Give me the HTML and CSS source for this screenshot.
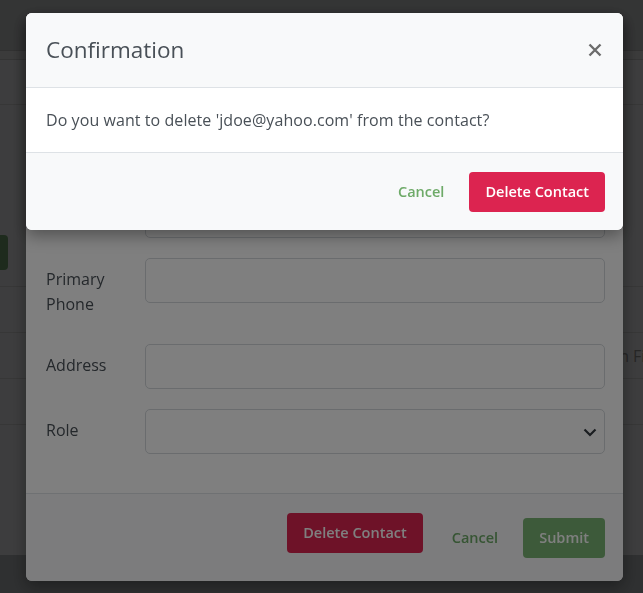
FILE: index.html
```html
<!DOCTYPE html>
<html lang="en">
<head>
<meta charset="utf-8">
<title>Contacts</title>
<link rel="stylesheet" href="styles.css">
</head>
<body>
<div class="page">
  <header class="topbar"></header>
  <div class="subbar"></div>
  <div class="titlebar"></div>
  <div class="toolbar"><span class="add-btn"></span></div>
  <div class="table">
    <div class="trow"></div>
    <div class="trow"><span></span><span class="cell-name">Jordan Finley</span></div>
    <div class="trow"></div>
    <div class="trow filler"></div>
  </div>
</div>

<div class="backdrop backdrop-form">
  <div class="modal form-modal">
    <div class="modal-header">
      <h5 class="modal-title">Edit Contact</h5>
    </div>
    <div class="modal-body form-body">
      <div class="form-row tall"><label class="form-label">Display Name</label><div class="control"></div></div>
      <div class="form-row"><label class="form-label">Email</label><div class="control"></div></div>
      <div class="form-row tall"><label class="form-label">Primary Phone</label><div class="control"></div></div>
      <div class="form-row"><label class="form-label">Address</label><div class="control"></div></div>
      <div class="form-row"><label class="form-label">Role</label>
        <div class="control select">
          <svg class="chevron" width="14" height="9" viewBox="0 0 14 9"><path d="M1.5 1.5 L7 7 L12.5 1.5" fill="none" stroke="#343a40" stroke-width="2.2"/></svg>
        </div>
      </div>
    </div>
    <div class="modal-footer form-footer">
      <button class="btn btn-danger btn-raised">Delete Contact</button>
      <button class="btn btn-link">Cancel</button>
      <button class="btn btn-success">Submit</button>
    </div>
  </div>
</div>

<div class="backdrop backdrop-confirm">
  <div class="modal confirm-modal">
    <div class="modal-header">
      <h5 class="modal-title">Confirmation</h5>
      <button class="btn-close" aria-label="Close">
        <svg width="14" height="14" viewBox="0 0 14 14"><path d="M1.5 1.5 L12.5 12.5 M12.5 1.5 L1.5 12.5" stroke="#6c6c6c" stroke-width="2.4" fill="none"/></svg>
      </button>
    </div>
    <div class="modal-body">Do you want to delete 'jdoe@yahoo.com' from the contact?</div>
    <div class="modal-footer">
      <button class="btn btn-link">Cancel</button>
      <button class="btn btn-danger">Delete Contact</button>
    </div>
  </div>
</div>
</body>
</html>
```

FILE: styles.css
```css
html, body {
  margin: 0;
  padding: 0;
}
body {
  font-family: "Open Sans", "Noto Sans", sans-serif;
  font-size: 16px;
  color: #495057;
  background: #bcc0c4;
  height: 593px;
  overflow: hidden;
}

/* underlying page */
.page {
  background: #f6f7f8;
  height: 555px;
}
.topbar {
  height: 50px;
  background: #d2d4d6;
  border-bottom: 1px solid #c4c4c4;
}
.subbar {
  height: 8px;
  background: #ececec;
  border-bottom: 1px solid #d0d0d0;
}
.titlebar {
  height: 44px;
  border-bottom: 1px solid #dcdcdc;
}
.toolbar {
  height: 182px;
  box-sizing: border-box;
  padding-top: 130px;
  border-bottom: 1px solid #dcdcdc;
}
.add-btn {
  display: block;
  width: 8px;
  height: 35px;
  background: #78ae74;
  border-radius: 0 4px 4px 0;
}
.trow {
  height: 45px;
  border-bottom: 1px solid #dcdcdc;
  display: grid;
  grid-template-columns: 580px 1fr;
  align-items: center;
  color: #9a9a9a;
  white-space: nowrap;
  overflow: hidden;
}
.trow.filler {
  border-bottom: 0;
  height: 129px;
}

/* modal backdrops (each darkens what lies beneath by 50%) */
.backdrop {
  position: fixed;
  top: 0;
  left: 0;
  width: 100%;
  height: 100%;
  box-sizing: border-box;
  background-color: rgba(0, 0, 0, 0.5);
  padding: 13px 0 0 26px;
}
.backdrop-form {
  z-index: 10;
}
.backdrop-confirm {
  z-index: 20;
}
.modal {
  width: 597px;
  background: #fff;
  border-radius: 6px;
  overflow: hidden;
  box-shadow: 0 6px 16px rgba(0, 0, 0, 0.35);
}
.modal-header {
  height: 74px;
  background: #f8f9fa;
  border-bottom: 1px solid #dee2e6;
  display: flex;
  align-items: center;
  justify-content: space-between;
  padding: 0 21px 0 20px;
}
.modal-title {
  margin: 0;
  font-size: 22.5px;
  font-weight: 400;
  color: #495057;
  line-height: 1;
}
.btn-close {
  border: 0;
  background: none;
  padding: 0;
  width: 14px;
  height: 14px;
  display: flex;
}
.modal-body {
  height: 64px;
  box-sizing: border-box;
  padding: 20px 20px;
  line-height: 24px;
  color: #495057;
  letter-spacing: 0.07px;
}
.modal-footer {
  height: 77px;
  background: #f8f9fa;
  border-top: 1px solid #dee2e6;
  display: flex;
  align-items: center;
  justify-content: flex-end;
  padding: 0 18px 0 20px;
}
.btn {
  font-family: inherit;
  font-size: 14.5px;
  font-weight: 600;
  height: 40px;
  padding: 0 16px;
  border: 0;
  border-radius: 4px;
  margin-left: 14px;
  cursor: pointer;
  letter-spacing: 0;
}
.btn-link {
  background: none;
  color: #6eaa68;
  padding: 0 11px 0 13px;
}
.btn-danger {
  background: #dc2450;
  color: #fff;
}
.btn-success {
  background: #7ab474;
  color: #fff;
}

/* form modal */
.form-modal {
  height: 568px;
  display: flex;
  flex-direction: column;
}
.form-body {
  height: auto;
  padding: 19px 18px 19px 20px;
  letter-spacing: 0;
}
.form-row {
  display: grid;
  grid-template-columns: 87px 1fr;
  column-gap: 12px;
  margin-bottom: 20px;
}
.form-row.tall {
  min-height: 66px;
}
.form-label {
  padding: 9px 0 7px;
  line-height: 25px;
  color: #495057;
}
.control {
  height: 45px;
  box-sizing: border-box;
  border: 1px solid #d4d8dc;
  border-radius: 5px;
  background: #fff;
  position: relative;
}
.chevron {
  position: absolute;
  right: 7px;
  top: 18px;
}
.form-footer {
  height: auto;
  flex: 1;
}
.btn-raised {
  margin-bottom: 10px;
  margin-right: 2px;
}
```
